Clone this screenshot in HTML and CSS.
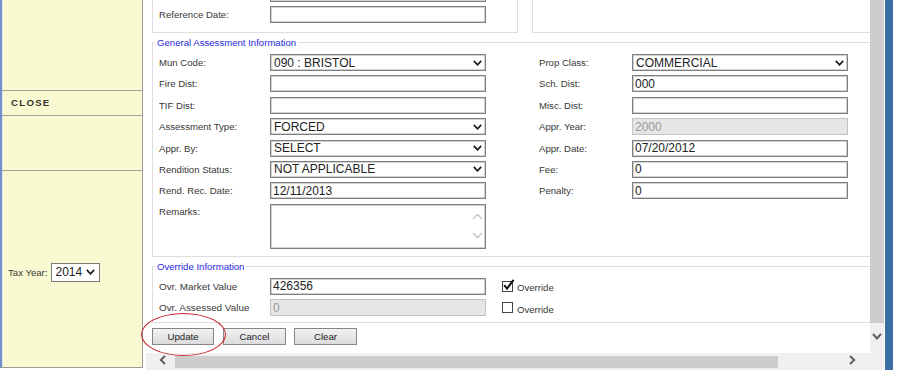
FILE: index.html
```html
<!DOCTYPE html>
<html lang="en">
<head>
  <meta charset="UTF-8" />
  <meta name="viewport" content="width=device-width, initial-scale=1" />
  <title>Assessment Information</title>
  <link rel="stylesheet" href="styles.css">
</head>
<body>

  <!-- Left menu panel -->
  <aside class="sidebar">
    <div class="side-top"></div>
    <div class="side-close">CLOSE</div>
    <div class="side-blank"></div>
    <div class="side-year">
      <label for="taxYear">Tax Year:</label>
      <span class="select-wrap year-wrap">
        <select id="taxYear" class="year-select"><option>2014</option><option>2013</option></select>
        <svg class="chev" width="9" height="6" viewBox="0 0 9 6"><polyline points="0.8,0.8 4.5,4.8 8.2,0.8" /></svg>
      </span>
    </div>
  </aside>

  <!-- Scrolled form pane -->
  <main class="pane">
    <div class="viewport">
      <div class="content">

        <div class="top-row">
          <div class="box box-left">
            <div class="pair-grid">
              <span></span><input class="field" type="text">
              <label>Reference Date:</label><input class="field" type="text">
            </div>
          </div>
          <div class="box box-right"></div>
        </div>

        <fieldset class="group">
          <legend>General Assessment Information</legend>
          <div class="assess-grid">
            <label>Mun Code:</label>
            <span class="select-wrap">
              <select class="field"><option>090 : BRISTOL</option></select>
              <svg class="chev" width="9" height="6" viewBox="0 0 9 6"><polyline points="0.8,0.8 4.5,4.8 8.2,0.8" /></svg>
            </span>
            <label class="rlabel">Prop Class:</label>
            <span class="select-wrap">
              <select class="field"><option>COMMERCIAL</option></select>
              <svg class="chev" width="9" height="6" viewBox="0 0 9 6"><polyline points="0.8,0.8 4.5,4.8 8.2,0.8" /></svg>
            </span>

            <label>Fire Dist:</label><input class="field" type="text">
            <label class="rlabel">Sch. Dist:</label><input class="field" type="text" value="000">

            <label>TIF Dist:</label><input class="field" type="text">
            <label class="rlabel">Misc. Dist:</label><input class="field" type="text">

            <label>Assessment Type:</label>
            <span class="select-wrap">
              <select class="field"><option>FORCED</option></select>
              <svg class="chev" width="9" height="6" viewBox="0 0 9 6"><polyline points="0.8,0.8 4.5,4.8 8.2,0.8" /></svg>
            </span>
            <label class="rlabel">Appr. Year:</label><input class="field" type="text" value="2000" disabled>

            <label>Appr. By:</label>
            <span class="select-wrap">
              <select class="field"><option>SELECT</option></select>
              <svg class="chev" width="9" height="6" viewBox="0 0 9 6"><polyline points="0.8,0.8 4.5,4.8 8.2,0.8" /></svg>
            </span>
            <label class="rlabel">Appr. Date:</label><input class="field" type="text" value="07/20/2012">

            <label>Rendition Status:</label>
            <span class="select-wrap">
              <select class="field"><option>NOT APPLICABLE</option></select>
              <svg class="chev" width="9" height="6" viewBox="0 0 9 6"><polyline points="0.8,0.8 4.5,4.8 8.2,0.8" /></svg>
            </span>
            <label class="rlabel">Fee:</label><input class="field" type="text" value="0">

            <label>Rend. Rec. Date:</label><input class="field" type="text" value="12/11/2013">
            <label class="rlabel">Penalty:</label><input class="field" type="text" value="0">

            <label class="top-label">Remarks:</label>
            <div class="memo">
              <textarea></textarea>
              <div class="memo-bar">
                <svg width="11" height="7" viewBox="0 0 11 7"><polyline points="1,6 5.5,1.5 10,6" /></svg>
                <svg width="11" height="7" viewBox="0 0 11 7"><polyline points="1,1 5.5,5.5 10,1" /></svg>
              </div>
            </div>
          </div>
        </fieldset>

        <fieldset class="group override">
          <legend>Override Information</legend>
          <div class="override-grid">
            <label>Ovr. Market Value</label>
            <input class="field" type="text" value="426356">
            <span></span>
            <label class="chk-row">
              <span class="chk">
                <input type="checkbox" checked>
                <svg width="13" height="13" viewBox="0 0 13 13"><polyline points="2.2,6.2 5,9.6 11.6,0.8" /></svg>
              </span>
              <span class="chk-text">Override</span>
            </label>

            <label>Ovr. Assessed Value</label>
            <input class="field" type="text" value="0" disabled>
            <span></span>
            <label class="chk-row">
              <span class="chk"><input type="checkbox"></span>
              <span class="chk-text">Override</span>
            </label>
          </div>
        </fieldset>

        <div class="actions">
          <button type="button" class="btn btn-update">Update</button>
          <button type="button" class="btn btn-cancel">Cancel</button>
          <button type="button" class="btn">Clear</button>
        </div>

      </div>
    </div>

    <!-- Scrollbars -->
    <div class="vscroll">
      <div class="vthumb"></div>
      <div class="varrow">
        <svg width="10" height="7" viewBox="0 0 10 7"><polyline points="1,1 5,5.5 9,1" /></svg>
      </div>
    </div>
    <div class="hscroll">
      <div class="harrow harrow-left">
        <svg width="7" height="10" viewBox="0 0 7 10"><polyline points="6,1 1.8,5 6,9" /></svg>
      </div>
      <div class="hthumb"></div>
      <div class="harrow harrow-right">
        <svg width="7" height="10" viewBox="0 0 7 10"><polyline points="1,1 5.2,5 1,9" /></svg>
      </div>
    </div>
    <div class="corner"></div>
  </main>

  <div class="frame-edge"></div>

  <!-- Annotation around the Update button -->
  <div class="callout"></div>

</body>
</html>
```

FILE: styles.css
```css
/* Base */
* {
  box-sizing: border-box;
}

body {
  margin: 0;
  width: 897px;
  height: 370px;
  overflow: hidden;
  display: flex;
  position: relative;
  background: #fff;
  font-family: "Liberation Sans", Arial, sans-serif;
  font-size: 9.6px;
  color: #383838;
}

label {
  white-space: nowrap;
}

/* Sidebar */
.sidebar {
  flex: none;
  width: 143px;
  height: 368px;
  display: flex;
  flex-direction: column;
  background: #fafad2;
  border-left: 2px solid #7190c6;
  border-right: 1px solid #9a9a9a;
  border-bottom: 1px solid #9a9a9a;
  box-shadow: inset 1px 0 #dfe6f1;
}

.side-top,
.side-close,
.side-blank {
  flex: none;
  border-bottom: 1px solid #a3a3a3;
}

.side-top {
  height: 91px;
}

.side-close {
  height: 25px;
  display: flex;
  align-items: center;
  padding: 0 0 1px 9px;
  font-weight: 700;
  letter-spacing: 1.3px;
  color: #333;
}

.side-blank {
  height: 55px;
}

.side-year {
  flex: 1;
  display: flex;
  align-items: center;
  gap: 4px;
  padding: 6px 0 0 6px;
}

.year-wrap {
  width: 49px;
  height: 19px;
}

.year-select {
  width: 100%;
  height: 100%;
  margin: 0;
  padding: 0 0 0 3px;
  appearance: none;
  border: 1px solid #7a7a7a;
  background: #fff;
  font-family: inherit;
  font-size: 12px;
  color: #222;
}

.year-wrap .chev {
  right: 5px;
}

/* Pane with scrollbars */
.pane {
  flex: none;
  margin-left: 3px;
  display: grid;
  grid-template-columns: 724px 14px;
  grid-template-rows: 353px 17px;
}

.viewport {
  overflow: hidden;
  position: relative;
}

.content {
  width: 740px;
  padding-left: 6px;
}

/* Top boxes (scrolled partly out of view) */
.top-row {
  display: flex;
  gap: 14px;
  margin-top: -16.4px;
}

.box {
  border: 1px solid #dedede;
}

.box-left {
  flex: none;
  width: 366px;
  padding: 0 0 9px 6px;
}

.box-right {
  flex: 1;
}

.pair-grid {
  display: grid;
  grid-template-columns: 111px 216px;
  grid-auto-rows: 17px;
  row-gap: 4.4px;
  align-items: center;
}

/* Fieldsets */
.group {
  margin: 4px 0 0;
  padding: 0 0 7px 2px;
  border: 1px solid #dedede;
  min-width: 0;
}

.group legend {
  padding: 0 2px;
  line-height: 11px;
  font-size: 9.6px;
  color: #2727dd;
}

.assess-grid {
  margin: 6px 0 0 4px;
  display: grid;
  grid-template-columns: 111px 216px 53px 93px 216px;
  grid-template-rows: repeat(7, 17px) 45px;
  row-gap: 4.4px;
  align-items: center;
}

.assess-grid .rlabel {
  grid-column: 4;
}

.assess-grid .top-label {
  align-self: start;
  padding-top: 2px;
}

/* Inputs */
.field {
  display: block;
  width: 216px;
  height: 17px;
  margin: 0;
  padding: 0 2px;
  border: 1px solid #7e7e7e;
  box-shadow: inset 0 0 0 1px #d2d2d2;
  background: #fff;
  font-family: inherit;
  font-size: 12px;
  color: #222;
  outline: none;
}

.field:disabled {
  background: #e6e6e6;
  border-color: #c3c3c3;
  box-shadow: none;
  color: #9a9a9a;
}

select.field {
  appearance: none;
  padding-left: 3px;
}

.select-wrap {
  position: relative;
  display: block;
}

.chev {
  position: absolute;
  right: 4px;
  top: 50%;
  margin-top: -3px;
  pointer-events: none;
}

.chev polyline {
  fill: none;
  stroke: #1e1e1e;
  stroke-width: 1.7;
}

/* Remarks memo */
.memo {
  display: flex;
  width: 216px;
  height: 45px;
  border: 1px solid #7e7e7e;
  box-shadow: inset 0 0 0 1px #d2d2d2;
  background: #fff;
}

.memo textarea {
  flex: 1;
  margin: 1px 0 1px 1px;
  border: none;
  resize: none;
  outline: none;
  font-family: inherit;
  font-size: 12px;
}

.memo-bar {
  width: 15px;
  display: flex;
  flex-direction: column;
  justify-content: space-between;
  align-items: center;
  padding: 8px 0 9px;
}

.memo-bar polyline {
  fill: none;
  stroke: #c2c2c2;
  stroke-width: 1.3;
}

/* Override */
.override {
  margin-top: 4px;
  padding-bottom: 6px;
}

.override-grid {
  margin: 6px 0 0 4px;
  display: grid;
  grid-template-columns: 111px 216px 16px auto;
  grid-auto-rows: 17px;
  row-gap: 4.3px;
  align-items: center;
}

.override-grid > label:first-child,
.override-grid > label:nth-child(5) {
  font-size: 9.9px;
}

.chk-row {
  display: flex;
  align-items: center;
  gap: 4px;
}

.chk {
  position: relative;
  width: 11px;
  height: 11px;
}

.chk input {
  appearance: none;
  display: block;
  width: 11px;
  height: 11px;
  margin: 0;
  border: 1px solid #444;
  background: #fff;
}

.chk svg {
  position: absolute;
  left: 0;
  top: -2px;
}

.chk polyline {
  fill: none;
  stroke: #111;
  stroke-width: 2;
}

.chk-text {
  padding-top: 3px;
}

/* Buttons */
.actions {
  display: flex;
  margin-top: 5px;
}

.btn {
  width: 63px;
  height: 17px;
  margin: 0 8px 0 0;
  padding: 0;
  border: 1px solid #858585;
  background: linear-gradient(#f2f2f2, #dcdcdc);
  font-family: inherit;
  font-size: 9.6px;
  color: #222;
}

.btn-update {
  width: 62px;
  margin-right: 9px;
}

/* Scrollbars */
.vscroll {
  display: flex;
  flex-direction: column;
  background: #f0f0f0;
}

.vthumb {
  height: 323px;
  background: #cdcdcd;
}

.varrow {
  flex: 1;
  display: flex;
  align-items: center;
  justify-content: center;
  padding-bottom: 4px;
}

.hscroll {
  display: flex;
  background: #f0f0f0;
}

.harrow {
  display: flex;
  align-items: center;
  justify-content: center;
  padding-bottom: 3px;
}

.harrow-left {
  width: 29px;
  padding-left: 4px;
}

.harrow-right {
  margin-left: auto;
  width: 38px;
  padding-left: 2px;
}

.hthumb {
  width: 603px;
  height: 12px;
  margin-top: 3px;
  background: #cdcdcd;
}

.vscroll polyline,
.hscroll polyline {
  fill: none;
  stroke: #5f5f5f;
  stroke-width: 2;
}

.corner {
  background: #f0f0f0;
}

.frame-edge {
  flex: none;
  width: 8px;
  margin-left: 1px;
  background: #3a6ea5;
}

/* Red annotation ellipse */
.callout {
  position: absolute;
  left: 141px;
  top: 313px;
  width: 85px;
  height: 43px;
  border: 1.6px solid #c9252b;
  border-radius: 50%;
  pointer-events: none;
}
```
